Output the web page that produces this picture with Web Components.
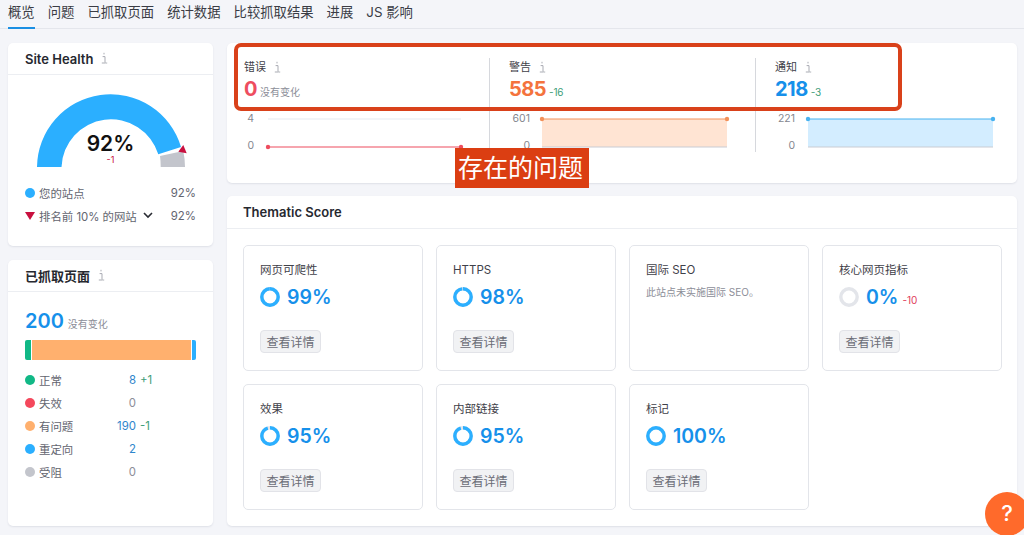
<!DOCTYPE html>
<html lang="zh">
<head>
<meta charset="utf-8">
<title>概览</title>
<style>
  html, body { margin: 0; height: 535px; overflow: hidden; background: #f4f5f9; }
  body { font-family: Inter, "Noto Sans CJK SC", sans-serif; color: #333640; }
</style>
</head>
<body>
<audit-page></audit-page>

<script>
const INFO_ICON = `<svg width="7" height="12" viewBox="0 0 7 12" fill="none" stroke="#a9abb3" stroke-width="1"><path d="M3 .8v1.6"/><path d="M1.6 4.6H4v5.6c0 .6.6 1 2.2.8"/><path d="M.8 11h3.4"/></svg>`;

class AuditTabs extends HTMLElement {
  constructor() {
    super();
    const names = ['概览', '问题', '已抓取页面', '统计数据', '比较抓取结果', '进展', 'JS 影响'];
    this.attachShadow({mode: 'open'}).innerHTML = `
      <style>
        :host { display: flex; gap: 13px; height: 28px; padding-left: 8px; border-bottom: 1px solid #e4e6ec; font-size: 13.35px; line-height: 24px; color: #3a3c45; }
        span { display: block; height: 28px; white-space: nowrap; box-sizing: border-box; }
        .on { border-bottom: 2px solid #1a8fe3; margin-bottom: -1px; height: 29px; }
      </style>
      ${names.map((n, i) => `<span class="${i == 0 ? 'on' : ''}">${n}</span>`).join('')}`;
  }
}

class AuditCard extends HTMLElement {
  constructor() {
    super();
    this.attachShadow({mode: 'open'}).innerHTML = `
      <style>
        :host { display: block; box-sizing: border-box; background: #fff; border-radius: 5px; box-shadow: 0 1px 2px rgba(40,50,80,.1); overflow: hidden; }
        header { display: flex; align-items: center; gap: 8px; height: 31px; padding-left: 17px; border-bottom: 1px solid #eceef2; font-size: 13px; font-weight: 600; color: #26282f; }
        :host([wide]) header { height: 32px; padding-left: 16px; }
      </style>
      <header><span id="t"></span><slot name="icon"></slot></header>
      <slot></slot>`;
    this.shadowRoot.getElementById('t').textContent = this.getAttribute('heading');
  }
}

class LegendRow extends HTMLElement {
  constructor() {
    super();
    this.attachShadow({mode: 'open'}).innerHTML = `
      <style>
        :host { display: flex; align-items: center; height: 23px; font-size: 11.4px; color: #63656f; }
        i { width: 10px; height: 10px; border-radius: 50%; margin-right: 4px; flex: none; }
        svg { margin-right: 4px; flex: none; }
        .l { flex: 1; white-space: nowrap; display: flex; align-items: center; }
      </style>
      ${this.getAttribute('marker') == 'tri'
        ? `<svg width="10" height="10" viewBox="0 0 10 10"><path d="M0 1h10L5 9z" fill="#c8103f"/></svg>`
        : `<i style="background:${this.getAttribute('color')}"></i>`}
      <span class="l"><slot></slot></span>
      <slot name="end"></slot>`;
  }
}

class SiteHealth extends HTMLElement {
  constructor() {
    super();
    this.attachShadow({mode: 'open'}).innerHTML = `
      <style>
        :host { display: block; height: 203px; }
        .gauge { position: relative; height: 74px; margin: 18px 0 0 0; }
        svg.arc { display: block; position: absolute; left: 22px; top: 0; }
        .pct { position: absolute; left: 0; width: 205px; text-align: center; top: 41px; font-size: 21px; line-height: 20px; font-weight: 600; color: #111; }
        .chg { position: absolute; left: 0; width: 205px; text-align: center; top: 62px; font-size: 9px; line-height: 10px; color: #c8103f; }
        .rows { padding: 14px 17px 0 17px; }
        b { font-weight: 400; font-size: 11.4px; }
        svg.chev { margin-left: 6px; }
      </style>
      <audit-card heading="Site Health" style="height:203px">
        <span slot="icon">${INFO_ICON}</span>
        <div class="gauge">
          <svg class="arc" width="160" height="74" viewBox="0 0 160 74">
            <path d="M7 74 A73.5 73.5 0 0 1 151 54 L128.3 61.3 A49.5 49.5 0 0 0 31.5 74 Z" fill="#2bafff"/>
            <path d="M130 63 L153.3 58 Q155 66 155 74 L130.7 74 Q130.7 68 130 63 Z" fill="#c3c5cc"/>
            <path d="M153.3 52 L148.3 58.7 L156.7 60.3 Z" fill="#c8103f"/>
          </svg>
          <div class="pct">92%</div>
          <div class="chg">-1</div>
        </div>
        <div class="rows">
          <legend-row color="#2bafff">您的站点<b slot="end">92%</b></legend-row>
          <legend-row marker="tri">排名前 10% 的网站<svg class="chev" width="10" height="7" viewBox="0 0 10 7" fill="none" stroke="#2a2c33" stroke-width="1.6"><path d="M1 1l4 4 4-4"/></svg><b slot="end">92%</b></legend-row>
        </div>
      </audit-card>`;
  }
}

class CrawledPages extends HTMLElement {
  constructor() {
    super();
    const rows = [
      ['#11b886', '正常', '8', '+1', true],
      ['#f4485c', '失效', '0', '', false],
      ['#ffb06e', '有问题', '190', '-1', true],
      ['#2bafff', '重定向', '2', '', true],
      ['#c3c5cc', '受阻', '0', '', false]
    ];
    this.attachShadow({mode: 'open'}).innerHTML = `
      <style>
        :host { display: block; height: 266px; }
        .total { display: flex; align-items: baseline; gap: 4px; padding: 17px 0 0 17px; height: 31px; box-sizing: content-box; }
        .total b { font-size: 20px; line-height: 24px; font-weight: 600; color: #1690ea; }
        .total span { font-size: 10px; color: #8c8e98; }
        .bar { display: flex; gap: 1px; height: 20px; margin: 0 17px 8px 17px; border-radius: 2px; overflow: hidden; }
        .bar i { display: block; }
        .rows { padding: 0 0 0 17px; }
        .n { width: 54px; text-align: right; font-size: 11.4px; margin-right: 4px; }
        .d { width: 73px; font-size: 11.4px; color: #3e9d78; }
        .link { color: #2f86cc; }
        .zero { color: #8c8e98; }
      </style>
      <audit-card heading="已抓取页面" style="height:266px">
        <span slot="icon">${INFO_ICON}</span>
        <div class="total"><b>200</b><span>没有变化</span></div>
        <div class="bar">
          <i style="width:6px;background:#11b886"></i>
          <i style="width:159px;background:#ffb06e"></i>
          <i style="width:4px;background:#2bafff"></i>
        </div>
        <div class="rows">
          ${rows.map(r => `<legend-row color="${r[0]}">${r[1]}<span slot="end" style="display:flex"><span class="n ${r[4] ? 'link' : 'zero'}">${r[2]}</span><span class="d">${r[3]}</span></span></legend-row>`).join('')}
        </div>
      </audit-card>`;
  }
}

class IssueStat extends HTMLElement {
  constructor() {
    super();
    const color = this.getAttribute('color');
    const fill = this.getAttribute('fill');
    const axis = this.getAttribute('axis');
    const labelw = this.getAttribute('labelw');
    const w = +this.getAttribute('chartw');
    const delta = this.getAttribute('delta');
    const top = fill
      ? `<path d="M4 4H${w + 4}V32H4Z" fill="${fill}"/><path d="M4 32H${w + 4}" stroke="#c9ccd3" stroke-width="1"/><path d="M4 4H${w + 4}" stroke="${color}" stroke-width="1"/><circle cx="4" cy="4" r="2.2" fill="${color}"/><circle cx="${w + 4}" cy="4" r="2.2" fill="${color}"/>`
      : `<path d="M4 4H${w + 4}" stroke="#eef0f4" stroke-width="1.5"/><path d="M4 32H${w + 4}" stroke="${color}" stroke-width="1.2"/><circle cx="4" cy="32" r="2.2" fill="${color}"/><circle cx="${w + 4}" cy="32" r="2.2" fill="${color}"/>`;
    this.attachShadow({mode: 'open'}).innerHTML = `
      <style>
        :host { display: block; box-sizing: border-box; height: 95px; }
        .name { display: flex; align-items: center; gap: 8px; font-size: 11px; line-height: 18px; color: #3f4149; }
        .val { display: flex; align-items: baseline; gap: 3px; height: 23px; margin-top: 2px; }
        .val b { font-size: 20px; line-height: 23px; font-weight: 700; letter-spacing: -.5px; color: ${this.getAttribute('numcolor')}; }
        .val span { font-size: 10px; letter-spacing: -.3px; color: #3e9d78; }
        .val span.flat { letter-spacing: 0; color: #8c8e98; }
        .chart { display: flex; margin-top: 12px; }
        .ax { width: ${labelw}px; font-size: 10.5px; line-height: 12px; color: #85878f; text-align: right; }
        .ax div { height: 27px; }
        .chart svg { display: block; margin-left: ${this.getAttribute('chartgap')}px; margin-top: 2px; }
      </style>
      <div class="name">${this.getAttribute('name')}${INFO_ICON}</div>
      <div class="val"><b>${this.getAttribute('value')}</b><span class="${delta == '没有变化' ? 'flat' : ''}">${delta}</span></div>
      <div class="chart">
        <div class="ax"><div>${axis}</div><div>0</div></div>
        <svg width="${w + 8}" height="38" viewBox="0 0 ${w + 8} 38">${top}</svg>
      </div>`;
  }
}

class IssuesPanel extends HTMLElement {
  constructor() {
    super();
    this.attachShadow({mode: 'open'}).innerHTML = `
      <style>
        :host { display: grid; grid-template-columns: 245px 266px 1fr; box-sizing: border-box; height: 140px; padding: 15px 0 0 17px; background: #fff; border-radius: 5px; box-shadow: 0 1px 2px rgba(40,50,80,.1); }
        .col { height: 94px; }
        .col + .col { border-left: 1px solid #d6d8dd; padding-left: 19px; }
      </style>
      <div class="col"><issue-stat name="错误" value="0" delta="没有变化" color="#ee4d5f" numcolor="#ee4d5f" axis="4" labelw="10" chartgap="10" chartw="193"></issue-stat></div>
      <div class="col"><issue-stat name="警告" value="585" delta="-16" color="#f2915a" numcolor="#f4733d" fill="#ffe4d3" axis="601" labelw="21" chartgap="8" chartw="185"></issue-stat></div>
      <div class="col"><issue-stat name="通知" value="218" delta="-3" color="#47b2f0" numcolor="#1690ea" fill="#d3edff" axis="221" labelw="20" chartgap="9" chartw="185"></issue-stat></div>`;
  }
}

class ScoreRing extends HTMLElement {
  constructor() {
    super();
    const pct = +this.getAttribute('pct');
    const c = 2 * Math.PI * 8.2;
    const on = c * pct / 100;
    this.attachShadow({mode: 'open'}).innerHTML = `
      <style>:host { display: block; width: 20px; height: 20px; } svg { display: block; }</style>
      <svg width="20" height="20" viewBox="0 0 20 20" fill="none" stroke-width="3.4">
        <circle cx="10" cy="10" r="8.2" stroke="#e3e5ea"/>
        ${pct > 0 ? `<circle cx="10" cy="10" r="8.2" stroke="#2bafff" stroke-dasharray="${on} ${c - on}" transform="rotate(-90 10 10)"/>` : ''}
      </svg>`;
  }
}

class ScoreTile extends HTMLElement {
  constructor() {
    super();
    const score = this.getAttribute('score');
    const note = this.getAttribute('note');
    const delta = this.getAttribute('delta');
    this.attachShadow({mode: 'open'}).innerHTML = `
      <style>
        :host { display: block; box-sizing: border-box; height: 126px; padding: 16px 16px 0 16px; background: #fff; border: 1px solid #e3e5ea; border-radius: 5px; }
        .t { font-size: 11.5px; line-height: 17px; color: #3f4149; }
        .note { margin-top: 6px; font-size: 10px; line-height: 14px; color: #8c8e98; }
        .s { display: flex; align-items: center; gap: 7px; height: 24px; margin-top: 6px; }
        .s b { font-size: 19.5px; line-height: 24px; font-weight: 600; color: #1690ea; }
        .s span { font-size: 10px; color: #e0405a; margin: 5px 0 0 -3px; }
        button { display: block; width: 61px; height: 23px; margin-top: 21px; padding: 0; box-sizing: border-box; font: inherit; font-size: 12px; color: #6b6d77; background: #f1f2f4; border: 1px solid #e2e3e8; border-radius: 4px; }
      </style>
      <div class="t">${this.getAttribute('name')}</div>
      ${note
        ? `<div class="note">${note}</div>`
        : `<div class="s"><score-ring pct="${score}"></score-ring><b>${score}%</b>${delta ? `<span>${delta}</span>` : ''}</div><button>查看详情</button>`}`;
  }
}

class ThematicScore extends HTMLElement {
  constructor() {
    super();
    const tiles = [
      ['网页可爬性', 99], ['HTTPS', 98], ['国际 SEO', null, '此站点未实施国际 SEO。'], ['核心网页指标', 0, null, '-10'],
      ['效果', 95], ['内部链接', 95], ['标记', 100]
    ];
    this.attachShadow({mode: 'open'}).innerHTML = `
      <style>
        :host { display: block; height: 330px; }
        .grid { display: grid; grid-template-columns: repeat(4, 180px); gap: 13px; padding: 16px 0 0 16px; }
      </style>
      <audit-card heading="Thematic Score" wide style="height:330px">
        <div class="grid">
          ${tiles.map(t => `<score-tile name="${t[0]}" ${t[1] !== null ? `score="${t[1]}"` : ''} ${t[2] ? `note="${t[2]}"` : ''} ${t[3] ? `delta="${t[3]}"` : ''}></score-tile>`).join('')}
        </div>
      </audit-card>`;
  }
}

class AuditPage extends HTMLElement {
  constructor() {
    super();
    this.attachShadow({mode: 'open'}).innerHTML = `
      <style>
        :host { display: block; position: relative; width: 1024px; height: 535px; overflow: hidden; }
        .main { display: grid; grid-template-columns: 205px 790px; column-gap: 14px; padding: 14px 0 0 8px; }
        .left { display: flex; flex-direction: column; gap: 14px; }
        .right { display: flex; flex-direction: column; gap: 13px; }
        /* red annotation drawn over the screenshot */
        .frame { position: absolute; left: 234px; top: 43px; width: 668px; height: 68px; box-sizing: border-box; border: 4px solid #d9411a; border-radius: 7px; }
        .tag { position: absolute; left: 455px; top: 148px; width: 134px; height: 40px; box-sizing: border-box; padding-left: 3px; background: #db3e12; color: #fff; font-size: 25px; line-height: 40px; white-space: nowrap; }
        .help { position: absolute; left: 985px; top: 492px; width: 44px; height: 44px; border-radius: 50%; background: #ff6a2b; color: #fff; font-size: 22px; font-weight: 500; line-height: 42px; text-align: center; }
      </style>
      <audit-tabs></audit-tabs>
      <div class="main">
        <div class="left">
          <site-health></site-health>
          <crawled-pages></crawled-pages>
        </div>
        <div class="right">
          <issues-panel></issues-panel>
          <thematic-score></thematic-score>
        </div>
      </div>
      <div class="frame"></div>
      <div class="tag">存在的问题</div>
      <div class="help">?</div>`;
  }
}

customElements.define('audit-tabs', AuditTabs);
customElements.define('audit-card', AuditCard);
customElements.define('legend-row', LegendRow);
customElements.define('site-health', SiteHealth);
customElements.define('crawled-pages', CrawledPages);
customElements.define('issue-stat', IssueStat);
customElements.define('issues-panel', IssuesPanel);
customElements.define('score-ring', ScoreRing);
customElements.define('score-tile', ScoreTile);
customElements.define('thematic-score', ThematicScore);
customElements.define('audit-page', AuditPage);
</script>
</body>
</html>
